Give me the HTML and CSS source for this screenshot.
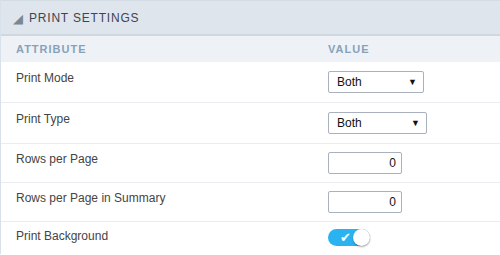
FILE: index.html
```html
<!DOCTYPE html>
<html>
<head>
  <title>Print Settings</title>
  <link rel="stylesheet" href="styles.css">
</head>
<body>
  <div class="panel">
    <div class="panel-head">
      <span class="caret">&#9698;</span>
      <span class="panel-title">Print Settings</span>
    </div>

    <div class="row row-head">
      <div>Attribute</div>
      <div>Value</div>
    </div>

    <div class="row row-select">
      <div class="label">Print Mode</div>
      <div class="select"><span>Both</span><span class="arrow">&#9660;</span></div>
    </div>

    <div class="row row-select">
      <div class="label">Print Type</div>
      <div class="select wide"><span>Both</span><span class="arrow">&#9660;</span></div>
    </div>

    <div class="row">
      <div class="label">Rows per Page</div>
      <input class="num" type="text" value="0">
    </div>

    <div class="row">
      <div class="label">Rows per Page in Summary</div>
      <input class="num" type="text" value="0">
    </div>

    <div class="row row-toggle">
      <div class="label">Print Background</div>
      <div class="toggle"><span class="check">&#10004;</span><span class="knob"></span></div>
    </div>
  </div>
</body>
</html>
```

FILE: styles.css
```css
body {
  margin: 0;
  padding: 0;
  background: #fff;
  font-family: "Liberation Sans", Arial, sans-serif;
  font-size: 12px;
  color: #444;
}

.panel {
  width: 500px;
  border-left: 1px solid #d8e1ea;
  box-sizing: border-box;
}

.panel-head {
  height: 33px;
  background: #dfe5ec;
  border-top: 1px solid #d3dbe3;
  border-bottom: 2px solid #cfd8e0;
  display: flex;
  align-items: center;
  padding-left: 12px;
}

.caret {
  color: #7d8792;
  font-size: 13px;
  margin-right: 6px;
  margin-top: 1px;
}

.panel-title {
  text-transform: uppercase;
  font-size: 12px;
  letter-spacing: 0.8px;
  color: #3e4450;
}

.row {
  display: grid;
  grid-template-columns: 312px 1fr;
  align-items: start;
  padding: 8px 0 8px 15px;
  line-height: 14px;
  border-bottom: 1px solid #e9edf2;
}

.row-head {
  height: 26px;
  padding: 0 0 0 15px;
  align-items: center;
  background: #eef2f6;
  border-bottom: none;
  text-transform: uppercase;
  font-size: 11px;
  font-weight: bold;
  letter-spacing: 1px;
  color: #86a2bb;
}

.row-select {
  padding: 9px 0 9px 15px;
}

.row-toggle {
  padding: 7px 0 8px 15px;
  border-bottom: none;
}

.label {
  color: #444;
}

.select {
  width: 96px;
  height: 22px;
  box-sizing: border-box;
  border: 1px solid #a9b1bc;
  border-radius: 2px;
  display: flex;
  align-items: center;
  justify-content: space-between;
  padding: 0 6px 0 8px;
  color: #111;
}

.select.wide {
  width: 99px;
}

.arrow {
  font-size: 9px;
  color: #111;
}

.num {
  width: 74px;
  height: 22px;
  box-sizing: border-box;
  border: 1px solid #a9b1bc;
  border-radius: 2px;
  padding: 0 5px;
  text-align: right;
  font-family: "Liberation Sans", Arial, sans-serif;
  font-size: 12px;
  color: #111;
  margin: 0;
}

.toggle {
  position: relative;
  width: 42px;
  height: 17px;
  border-radius: 9px;
  background: #2bb3f1;
}

.check {
  position: absolute;
  left: 12px;
  top: 1px;
  color: #fff;
  font-size: 13px;
  line-height: 15px;
}

.knob {
  position: absolute;
  right: 0;
  top: 0;
  width: 17px;
  height: 17px;
  border-radius: 50%;
  background: #fff;
  box-shadow: 0 1px 2px rgba(0, 0, 0, 0.35);
}
```
